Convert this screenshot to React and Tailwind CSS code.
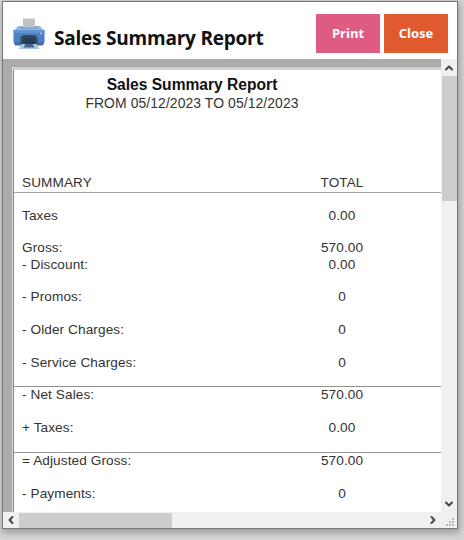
import { ChevronDown, ChevronLeft, ChevronRight, ChevronUp } from 'lucide-react';

const rows = [
  { label: 'Taxes', total: '0.00', gap: true },
  { label: 'Gross:', total: '570.00' },
  { label: '- Discount:', total: '0.00', gap: true },
  { label: '- Promos:', total: '0', gap: true },
  { label: '- Older Charges:', total: '0', gap: true },
  { label: '- Service Charges:', total: '0', gap: true },
  { label: '- Net Sales:', total: '570.00', gap: true, line: true },
  { label: '+ Taxes:', total: '0.00', gap: true },
  { label: '= Adjusted Gross:', total: '570.00', gap: true, line: true },
  { label: '- Payments:', total: '0' },
];

const PrinterIcon = () => (
  <svg width="32" height="32" viewBox="0 0 32 32" className="shrink-0">
    <path d="M5 8h22l4.500 5H.5z" fill="#96b7de" />
    <path d="M8 8.500h16l1 2.500H7z" fill="#7f9fc6" />
    <path d="M10 .5h12V9.500H10z" fill="#bdc3c7" />
    <path d="M.5 12h31v12q0 2-2 2h-27q-2 0-2-2z" fill="#4c7fc3" />
    <path d="M.5 12h31v3H.5z" fill="#6294d2" />
    <path d="M1 24.500h30l-1 3H2z" fill="#3f6ba7" />
    <path d="M7.500 27v-5.500q0-4.500 4.500-4.500h8q4.500 0 4.500 4.500V27z" fill="#34495e" />
    <path d="M10 21.500q6-3 12 0v5H10z" fill="#263c59" />
    <path d="M8.500 26h15l3 5h-21z" fill="#abc6e6" />
    <path d="M12.500 26h7l2 3.500h-11z" fill="#45658f" />
    <circle cx="28" cy="15.500" r="1" fill="#a9d1f2" />
  </svg>
);

const Row = ({ label, total, gap, line }) => (
  <div className={`flex h-[16.35px] items-center pl-[8px] ${gap ? 'mb-[16.35px]' : ''} ${line ? 'shadow-[0_-1px_0_#929292]' : ''}`}>
    <span className="flex-1">{label}</span>
    <span className="mr-[51px] w-24 text-center">{total}</span>
  </div>
);

const Header = () => (
  <header className="flex h-[57px] shrink-0 items-start bg-white pl-[10px] pr-[9px]">
    <div className="mt-4">
      <PrinterIcon />
    </div>
    <h1 className="ml-[9px] mt-[23px] flex-1 whitespace-nowrap font-['Open_Sans',sans-serif] text-[19px] leading-[26px] font-bold tracking-[-0.22px] text-[#111]">
      Sales Summary Report
    </h1>
    <div className="mt-3 flex gap-1 font-['Open_Sans',sans-serif] text-[13px] font-bold text-white">
      <button className="h-[39px] w-16 bg-[#de5c82]">Print</button>
      <button className="h-[39px] w-16 bg-[#e05a30]">Close</button>
    </div>
  </header>
);

const Report = () => (
  <div className="min-w-0 flex-1 overflow-hidden bg-[#ababab] pl-[9px] pt-2">
    <div className="h-full border-t-[3px] border-l border-t-[#d0d0d0] border-l-[#dedede]">
      <div className="h-full border-l border-[#858585] bg-white font-['Liberation_Sans',sans-serif] text-[13.6px] leading-[16.35px] tracking-[0.1px] text-[#333]">
        <div className="pr-[71px] pt-[6px] text-center">
          <h2 className="text-[15.6px] leading-[18px] font-bold tracking-normal text-[#111]">Sales Summary Report</h2>
          <p className="text-[13.9px] leading-[18px]">FROM 05/12/2023 TO 05/12/2023</p>
        </div>
        <div className="mt-[63px] flex h-[18px] items-center border-b border-[#a5a5a5] pl-[8px]">
          <span className="flex-1">SUMMARY</span>
          <span className="mr-[51px] w-24 text-center">TOTAL</span>
        </div>
        <div className="pt-[14.700px]">
          {rows.map((row) => (
            <Row key={row.label} {...row} />
          ))}
        </div>
      </div>
    </div>
  </div>
);

const VerticalBar = () => (
  <div className="flex w-4 shrink-0 flex-col items-center bg-[#f0f0f0] text-[#444]">
    <div className="flex h-[17px] items-center">
      <ChevronUp size={12} strokeWidth={4} />
    </div>
    <div className="h-[125px] w-[15px] bg-[#cdcdcd]" />
    <div className="mt-auto flex h-[17px] items-center">
      <ChevronDown size={12} strokeWidth={4} />
    </div>
  </div>
);

const HorizontalBar = () => (
  <div className="flex h-4 shrink-0 items-center bg-[#f0f0f0] text-[#444]">
    <div className="flex w-4 justify-center">
      <ChevronLeft size={12} strokeWidth={4} />
    </div>
    <div className="h-[15px] w-[153px] bg-[#cdcdcd]" />
    <div className="ml-auto flex w-4 justify-center">
      <ChevronRight size={12} strokeWidth={4} />
    </div>
    <svg width="16" height="16" viewBox="0 0 16 16" fill="#b5b5b5">
      <path d="M11 6h2v2h-2zM8 9h2v2H8zM11 9h2v2h-2zM5 12h2v2H5zM8 12h2v2H8zM11 12h2v2h-2z" />
    </svg>
  </div>
);

export default function App() {
  return (
    <div className="h-[540px] w-[464px] overflow-hidden bg-[#d6d6d6] pl-[2px] pt-px">
      <div className="flex h-[528px] w-[456px] flex-col border border-[#777] bg-white shadow-[1px_3px_7px_1px_#00000045]">
        <Header />
        <div className="flex min-h-0 flex-1">
          <Report />
          <VerticalBar />
        </div>
        <HorizontalBar />
      </div>
    </div>
  );
}
